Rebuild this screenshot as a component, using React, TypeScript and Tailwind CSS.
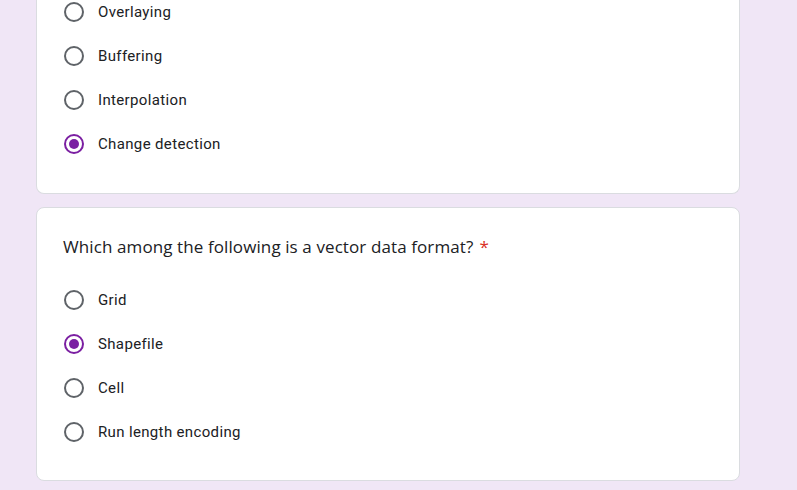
import React from "react";

function Radio({ checked }: { checked?: boolean }) {
  return checked ? (
    <div className="w-5 h-5 rounded-full border-2 border-[#7b1fa2] flex items-center justify-center shrink-0">
      <div className="w-[10px] h-[10px] rounded-full bg-[#7b1fa2]" />
    </div>
  ) : (
    <div className="w-5 h-5 rounded-full border-2 border-[#5f6368] shrink-0" />
  );
}

function Option({ label, checked }: { label: string; checked?: boolean }) {
  return (
    <div className="h-[44px] flex items-center">
      <Radio checked={checked} />
      <span className="ml-[14px] text-[15px] text-[#202124] tracking-[0.35px]" style={{ fontFamily: "Roboto, Arial, sans-serif" }}>
        {label}
      </span>
    </div>
  );
}

export default function App() {
  return (
    <div className="w-[797px] h-[490px] overflow-hidden bg-[#f0e6f6]">
      <div className="w-[704px] ml-[36px] -mt-[10px] flex flex-col gap-[13px]">
        <div className="bg-white border border-[#dadce0] rounded-b-[8px] border-t-0 px-[26px] pl-[27px] pb-[27px]">
          <Option label="Overlaying" />
          <Option label="Buffering" />
          <Option label="Interpolation" />
          <Option label="Change detection" checked />
        </div>
        <div className="bg-white border border-[#dadce0] rounded-[8px] px-[26px] pl-[26px] pt-[27px] pb-[26px]">
          <div className="pl-[1px]">
            <div className="text-[17px] text-[#202124] leading-[24px] mb-[19px] tracking-[0.1px] -ml-[1px]" style={{ fontFamily: "'Open Sans', Arial, sans-serif" }}>
              Which among the following is a vector data format?<span className="text-[#d93025] ml-[6px]">*</span>
            </div>
            <Option label="Grid" />
            <Option label="Shapefile" checked />
            <Option label="Cell" />
            <Option label="Run length encoding" />
          </div>
        </div>
      </div>
    </div>
  );
}
